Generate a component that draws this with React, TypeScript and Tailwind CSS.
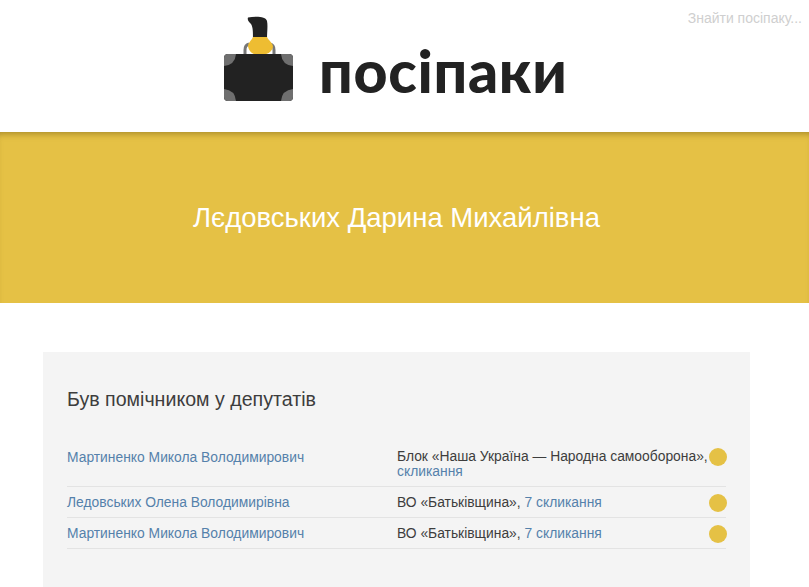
const rows = [
  {
    name: "Мартиненко Микола Володимирович",
    party: "Блок «Наша Україна — Народна самооборона»,",
    term: "скликання",
    tall: true,
  },
  { name: "Ледовських Олена Володимирівна", party: "ВО «Батьківщина»", term: "7 скликання" },
  { name: "Мартиненко Микола Володимирович", party: "ВО «Батьківщина»", term: "7 скликання" },
];

function Logo() {
  return (
    <svg width="72" height="86" viewBox="0 0 72 86" className="shrink-0">
      <path d="M25 1.5 C32 0 43 0 44 5 C45 10 44 16 44 23 L30 23 C30 16 30 11 28 8 C26 6 24 4 25 1.5 Z" fill="#222222" />
      <path d="M22 39 L22 34 Q22 29 26 28 M47 28 Q51 29 51 34 L51 39" fill="none" stroke="#777777" strokeWidth="3" />
      <path d="M25 30 C25 27 28 25 30 21 L44 21 C46 25 50 27 50 31 C49 36 44 39 37 39 C30 39 26 36 25 30 Z" fill="#eebd32" />
      <rect x="1" y="38" width="69" height="47" rx="4" fill="#222222" />
      <path d="M1 50 L1 42 Q1 38 5 38 L13 38 Q12 49 1 50 Z" fill="#6f6f6f" />
      <path d="M58 38 L66 38 Q70 38 70 42 L70 50 Q59 49 58 38 Z" fill="#6f6f6f" />
      <path d="M1 73 L1 81 Q1 85 5 85 L13 85 Q12 74 1 73 Z" fill="#6f6f6f" />
      <path d="M58 85 L66 85 Q70 85 70 81 L70 73 Q59 74 58 85 Z" fill="#6f6f6f" />
    </svg>
  );
}

export default function App() {
  return (
    <div className="h-[587px] overflow-hidden bg-white font-['Liberation_Sans',Arial,sans-serif] text-[13.85px] text-[#3d3d3d]">
      <header className="relative h-[132px] pl-[223px] pt-[16px]">
        <div className="flex items-start gap-[24px]">
          <Logo />
          <span className="mt-[15px] font-['Lato',sans-serif] text-[59px] leading-[80px] font-black tracking-[0.7px] text-[#222]">
            посіпаки
          </span>
        </div>
        <div className="absolute top-[10px] right-[7px] text-[14px] leading-[16px] text-[#cfcfcf]">Знайти посіпаку...</div>
      </header>

      <div className="flex h-[171px] items-center justify-center bg-[#e5c145] pr-[16px] shadow-[inset_0_6px_6px_-4px_rgba(120,95,20,0.55)]">
        <h1 className="text-[27.5px] leading-[32px] text-white">Лєдовських Дарина Михайлівна</h1>
      </div>

      <section className="mt-[49px] ml-[43px] w-[707px] bg-[#f4f4f4] px-[24px] pt-[36px] pb-[38px]">
        <h2 className="mb-[27px] text-[19.6px] leading-[22px]">Був помічником у депутатів</h2>
        <div className="pt-[2px]">
          {rows.map((row, i) => (
            <div key={i} className={`flex border-b border-[#e3e3e3] ${row.tall ? "h-[48px] pt-[10px]" : "h-[31px] items-center"}`}>
              <a className="w-[330px] shrink-0 leading-[16px] text-[#5581ab]">{row.name}</a>
              <div className="w-[312px] shrink-0 leading-[15px]">
                {row.tall ? <span className="block whitespace-nowrap">{row.party}</span> : `${row.party}, `}
                <a className="text-[#5581ab]">{row.term}</a>
              </div>
              <span className={`h-[18px] w-[18px] shrink-0 rounded-full bg-[#e5c145] ${row.tall ? "mt-[-1px]" : "mt-[1px]"}`} />
            </div>
          ))}
        </div>
      </section>
    </div>
  );
}
